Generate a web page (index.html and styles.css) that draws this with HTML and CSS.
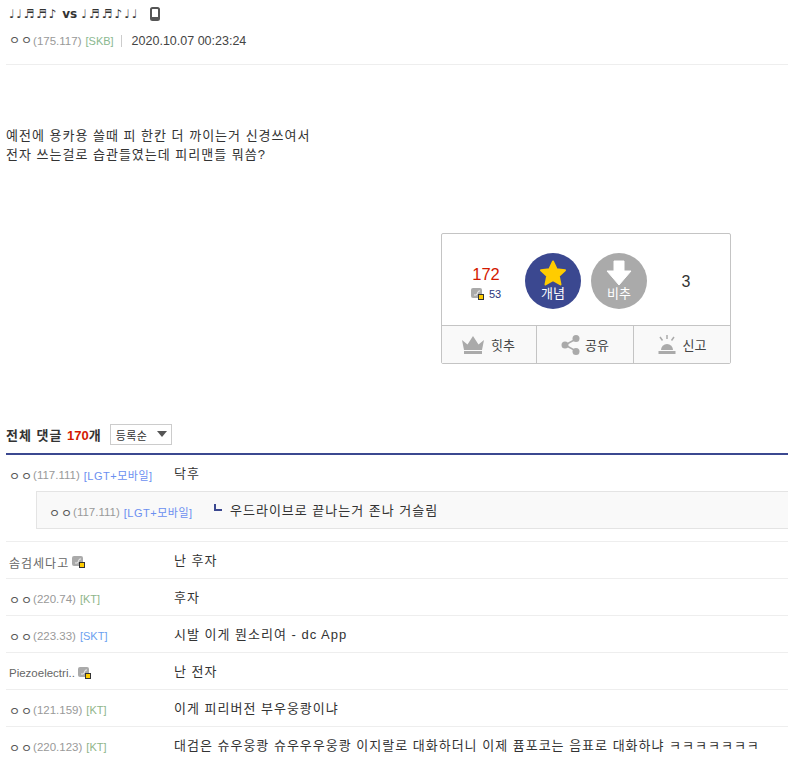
FILE: index.html
```html
<!DOCTYPE html>
<html lang="ko">
<head>
<meta charset="utf-8">
<title>글</title>
<link rel="stylesheet" href="styles.css">
</head>
<body>
<div class="page">
  <header class="head">
    <h1 class="title"><span class="titletext"><span class="notes">♩♩♬♬♪</span> vs <span class="notes wide">♩♬♬♪♩♩</span></span>
      <svg class="phone" width="10" height="14" viewBox="0 0 10 14"><rect x="1" y="1" width="8" height="12" rx="1.500" fill="none" stroke="#555" stroke-width="2"/><rect x="2" y="10" width="6" height="2" fill="#555"/></svg>
    </h1>
    <div class="meta">
      <span class="nick">ㅇㅇ</span><span class="ip">(175.117)</span> <span class="isp skb">[SKB]</span><span class="sep"></span><span class="date">2020.10.07 00:23:24</span>
    </div>
  </header>

  <div class="body">
    <p>예전에 용카용 쓸때 피 한칸 더 까이는거 신경쓰여서</p>
    <p>전자 쓰는걸로 습관들였는데 피리맨들 뭐씀?</p>
  </div>

  <div class="votewrap">
    <div class="vote">
      <div class="vote-top">
        <div class="score">
          <div class="up-num">172</div>
          <div class="up-sub"><svg class="gonic" width="13" height="12" viewBox="0 0 13 12"><rect x="0" y="0" width="11" height="10" rx="2" fill="#aaa"/><path d="M3 7h2.500l2-4H9" stroke="#eee" fill="none"/><rect x="7.500" y="6.500" width="5" height="5" fill="#fc0" stroke="#333"/></svg><span>53</span></div>
        </div>
        <div class="circle c-up">
          <svg width="28" height="26" viewBox="0 0 28 26"><path d="M14 1.500l3.600 7.700 8.400 1-6.200 5.800 1.700 8.400L14 20.200l-7.500 4.200 1.700-8.400L2 10.200l8.400-1z" fill="#fc0" stroke="#fc0" stroke-width="2" stroke-linejoin="round"/></svg>
          <span>개념</span>
        </div>
        <div class="circle c-down">
          <svg width="26" height="26" viewBox="0 0 26 26"><path d="M8 1h10v10h7L13 25 1 11h7z" fill="#fff" stroke="#fff" stroke-linejoin="round"/></svg>
          <span>비추</span>
        </div>
        <div class="down-num">3</div>
      </div>
      <div class="vote-bottom">
        <div class="vb vb1">
          <svg width="24" height="19" viewBox="0 0 24 19"><path d="M1 5l5.500 4.500L12 1l5.500 8.500L23 5l-2 10H3z" fill="#aaa"/><rect x="3" y="16" width="18" height="3" fill="#aaa"/></svg>
          <span>힛추</span>
        </div>
        <div class="vb vb2">
          <svg width="19" height="20" viewBox="0 0 19 20"><path d="M15 4L4 10l11 6" fill="none" stroke="#aaa" stroke-width="1.500"/><circle cx="15" cy="3.500" r="3.500" fill="#aaa"/><circle cx="4" cy="10" r="3.500" fill="#aaa"/><circle cx="15" cy="16.500" r="3.500" fill="#aaa"/></svg>
          <span>공유</span>
        </div>
        <div class="vb vb3">
          <svg width="18" height="20" viewBox="0 0 18 20"><path d="M3 15a6 6 0 0 1 12 0z" fill="#aaa"/><rect x="0.500" y="16" width="17" height="3" fill="#aaa"/><path d="M9 0v4M2 2l2.500 3.500M16 2l-2.500 3.500" stroke="#aaa" stroke-width="1.500"/></svg>
          <span>신고</span>
        </div>
      </div>
    </div>
  </div>

  <div class="chead">
    <span class="ctitle">전체 댓글 <em>170</em>개</span>
    <span class="sort">등록순<i class="caret"></i></span>
  </div>

  <ul class="list">
    <li class="row first">
      <div class="main">
        <span class="who"><span class="nick">ㅇㅇ</span><span class="ip">(117.111)</span> <span class="isp lgt">[LGT+모바일]</span></span>
        <span class="txt">닥후</span>
      </div>
      <div class="reply">
        <span class="who"><span class="nick">ㅇㅇ</span><span class="ip">(117.111)</span> <span class="isp lgt">[LGT+모바일]</span></span>
        <i class="elbow"></i>
        <span class="txt">우드라이브로 끝나는거 존나 거슬림</span>
      </div>
    </li>
    <li class="row">
      <span class="who login"><span class="name">솜검세다고</span><svg class="gonic" width="13" height="12" viewBox="0 0 13 12"><rect x="0" y="0" width="11" height="10" rx="2" fill="#aaa"/><path d="M3 7h2.500l2-4H9" stroke="#eee" fill="none"/><rect x="7.500" y="6.500" width="5" height="5" fill="#fc0" stroke="#333"/></svg></span>
      <span class="txt">난 후자</span>
    </li>
    <li class="row">
      <span class="who"><span class="nick">ㅇㅇ</span><span class="ip">(220.74)</span> <span class="isp kt">[KT]</span></span>
      <span class="txt">후자</span>
    </li>
    <li class="row">
      <span class="who"><span class="nick">ㅇㅇ</span><span class="ip">(223.33)</span> <span class="isp skt">[SKT]</span></span>
      <span class="txt">시발 이게 뭔소리여 - dc App</span>
    </li>
    <li class="row">
      <span class="who login"><span class="name latin">Piezoelectri..</span><svg class="gonic" width="13" height="12" viewBox="0 0 13 12"><rect x="0" y="0" width="11" height="10" rx="2" fill="#aaa"/><path d="M3 7h2.500l2-4H9" stroke="#eee" fill="none"/><rect x="7.500" y="6.500" width="5" height="5" fill="#fc0" stroke="#333"/></svg></span>
      <span class="txt">난 전자</span>
    </li>
    <li class="row">
      <span class="who"><span class="nick">ㅇㅇ</span><span class="ip">(121.159)</span> <span class="isp kt">[KT]</span></span>
      <span class="txt">이게 피리버전 부우웅쾅이냐</span>
    </li>
    <li class="row">
      <span class="who"><span class="nick">ㅇㅇ</span><span class="ip">(220.123)</span> <span class="isp kt">[KT]</span></span>
      <span class="txt">대검은 슈우웅쾅 슈우우우웅쾅 이지랄로 대화하더니 이제 퓸포코는 음표로 대화하냐 ㅋㅋㅋㅋㅋㅋㅋ</span>
    </li>
  </ul>
</div>
</body>
</html>
```
FILE: styles.css
```css
* { box-sizing: border-box; }
html, body { margin: 0; padding: 0; background: #fff; overflow: hidden; }
body { font-family: "Liberation Sans", "Noto Sans CJK KR", sans-serif; font-size: 13px; color: #333; }
.page { width: 788px; height: 762px; padding-left: 6px; overflow: hidden; }

.head { height: 65px; border-bottom: 1px solid #eee; padding-top: 4px; }
.title { margin: 0; height: 20px; line-height: 20px; font-weight: bold; color: #333; padding-left: 3px; display: flex; align-items: center; gap: 11px; white-space: nowrap; font-family: "DejaVu Sans", "Noto Sans CJK KR", sans-serif; font-size: 12px; }
.notes { letter-spacing: 1.700px; }
.notes.wide { letter-spacing: 2px; }
.phone { display: block; }
.meta { margin-top: 7px; height: 20px; line-height: 20px; padding-left: 3px; font-size: 12px; color: #333; display: flex; align-items: center; white-space: nowrap; }
.nick { color: #555; font-size: 12px; letter-spacing: 1px; }
.ip { color: #999; font-size: 11.500px; }
.isp { font-size: 11px; margin-left: 4px; }
.skb { color: #8ab88f; }
.lgt { color: #6b8ff0; letter-spacing: 0.500px; }
.kt { color: #8fb58a; }
.skt { color: #6b9ff0; }
.sep { width: 1px; height: 12px; background: #ccc; margin: 0 10px 0 7px; }
.date { font-size: 12.500px; color: #444; }

.body { height: 168px; padding-top: 61px; font-size: 13px; line-height: 19px; letter-spacing: 1px; color: #333; }
.body p { margin: 0; }

.votewrap { padding-left: 435px; }
.vote { width: 290px; height: 131px; border: 1px solid #c4c4c4; border-radius: 2px; background: #fff; }
.vote-top { height: 92px; display: flex; align-items: center; padding-top: 3px; border-bottom: 1px solid #c4c4c4; }
.score { width: 83px; padding-left: 5px; text-align: center; }
.up-num { font-size: 16.500px; line-height: 20px; margin-top: 3px; color: #d31900; }
.up-sub { display: flex; align-items: center; justify-content: center; gap: 5px; font-size: 11px; color: #29367c; line-height: 14px; margin-top: 3px; }
.circle { width: 56px; height: 56px; border-radius: 50%; display: flex; flex-direction: column; align-items: center; padding-top: 7px; color: #fff; font-size: 13px; line-height: 15px; }
.circle svg { display: block; }
.c-up { background: #3b4890; }
.c-down { background: #aaa; margin-left: 10px; }
.down-num { width: 78px; padding-top: 2px; text-align: center; font-size: 16px; color: #333; }

.vote-bottom { display: flex; height: 37px; background: #f9f9f9; }
.vb { display: flex; align-items: center; justify-content: center; gap: 6px; font-size: 13px; color: #444; border-right: 1px solid #c4c4c4; }
.vb1 { width: 95px; padding-right: 2px; }
.vb2 { width: 97px; gap: 5px; }
.vb3 { flex: 1; border-right: 0; gap: 7px; }

.chead { margin-top: 58px; height: 33px; display: flex; align-items: center; gap: 8px; border-bottom: 2px solid #3b4890; padding-bottom: 6px; margin-right: -10px; }
.ctitle { font-size: 13px; font-weight: bold; color: #333; letter-spacing: 1px; }
.ctitle em { font-style: normal; color: #d31900; letter-spacing: 0; }
.sort { width: 62px; height: 21px; border: 1px solid #ccc; display: flex; align-items: center; padding-left: 5px; font-size: 11px; letter-spacing: 0.400px; color: #333; position: relative; }
.caret { position: absolute; right: 4px; top: 6px; border-style: solid; border-width: 6px 5px 0 5px; border-color: #555 transparent transparent; }

.list { list-style: none; margin: 0 -10px 0 0; padding: 0; }
.row { height: 37px; border-bottom: 1px solid #eee; display: flex; align-items: center; white-space: nowrap; }
.row.first { display: block; height: 87px; }
.main { height: 36px; display: flex; align-items: center; }
.who { width: 168px; flex: none; padding-left: 3px; padding-top: 4px; font-size: 12px; display: flex; align-items: center; }
.name { color: #666; font-size: 12px; letter-spacing: 1px; margin-right: 3px; }
.name.latin { letter-spacing: 0; font-size: 11.500px; }
.txt { padding-top: 2px; font-size: 13px; letter-spacing: 1px; color: #333; line-height: 18px; }
.reply { margin-left: 30px; height: 38px; background: #f9f9f9; border: 1px solid #e4e4e4; display: flex; align-items: center; padding-left: 9px; }
.reply .who { width: 168px; }
.elbow { display: block; flex: none; width: 8px; height: 7px; border-left: 2px solid #3b4890; border-bottom: 2px solid #3b4890; margin-bottom: 6px; margin-right: 8px; }
```
